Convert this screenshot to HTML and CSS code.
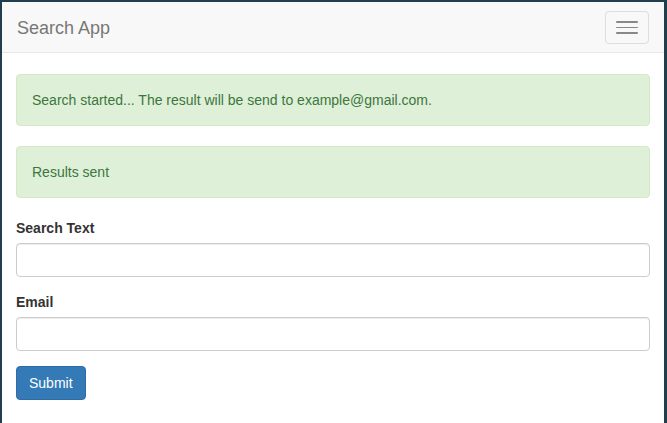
FILE: index.html
```html
<!DOCTYPE html>
<html lang="en">
<head>
<meta charset="utf-8">
<title>Search App</title>
<link rel="stylesheet" href="styles.css">
</head>
<body>
<div class="frame">
  <nav class="navbar">
    <span class="brand">Search App</span>
    <button class="toggle" type="button" aria-label="Toggle navigation">
      <span class="bar"></span>
      <span class="bar"></span>
      <span class="bar"></span>
    </button>
  </nav>
  <main class="content">
    <div class="alert">Search started... The result will be send to example@gmail.com.</div>
    <div class="alert">Results sent</div>
    <form class="form">
      <div class="group">
        <label class="label" for="q">Search Text</label>
        <input class="input" id="q" type="text">
      </div>
      <div class="group">
        <label class="label" for="e">Email</label>
        <input class="input" id="e" type="text">
      </div>
      <button class="btn" type="button">Submit</button>
    </form>
  </main>
</div>
</body>
</html>
```
FILE: styles.css
```css
* { box-sizing: border-box; }
html, body { margin: 0; padding: 0; }
body {
  font-family: "Liberation Sans", Arial, sans-serif;
  font-size: 14px;
  line-height: 20px;
  color: #333;
  background: #fff;
}
.frame {
  min-height: 100vh;
  border-top: 2px solid #203f4c;
  border-left: 2px solid #203f4c;
  border-right: 3px solid #203f4c;
  background: #fff;
}
.navbar {
  height: 51px;
  background: #f8f8f8;
  border-bottom: 1px solid #e7e7e7;
  display: flex;
  align-items: flex-start;
  justify-content: space-between;
  margin-bottom: 21px;
}
.brand {
  padding: 16px 15px 14px;
  font-size: 18px;
  line-height: 20px;
  color: #777;
}
.toggle {
  margin: 9px 15px 0 0;
  width: 44px;
  height: 33px;
  padding: 9px 10px;
  border: 1px solid #ddd;
  border-radius: 4px;
  background: transparent;
  display: flex;
  flex-direction: column;
  gap: 4px;
  align-items: center;
  justify-content: center;
}
.bar {
  display: block;
  width: 22px;
  height: 2px;
  border-radius: 1px;
  background: #888;
}
.content {
  padding: 0 14px 0 14px;
}
.alert {
  padding: 15px;
  margin-bottom: 20px;
  border: 1px solid #d6e9c6;
  border-radius: 4px;
  background: #dff0d8;
  color: #3c763d;
}
.group {
  margin-bottom: 15px;
}
.label {
  display: inline-block;
  margin-bottom: 5px;
  font-weight: bold;
}
.input {
  display: block;
  width: 100%;
  height: 34px;
  padding: 6px 12px;
  font: inherit;
  color: #555;
  background: #fff;
  border: 1px solid #ccc;
  border-radius: 4px;
  box-shadow: inset 0 1px 1px rgba(0,0,0,0.075);
}
.btn {
  display: inline-block;
  padding: 6px 12px;
  height: 34px;
  font: inherit;
  color: #fff;
  background: #337ab7;
  border: 1px solid #2e6da4;
  border-radius: 4px;
}
```
